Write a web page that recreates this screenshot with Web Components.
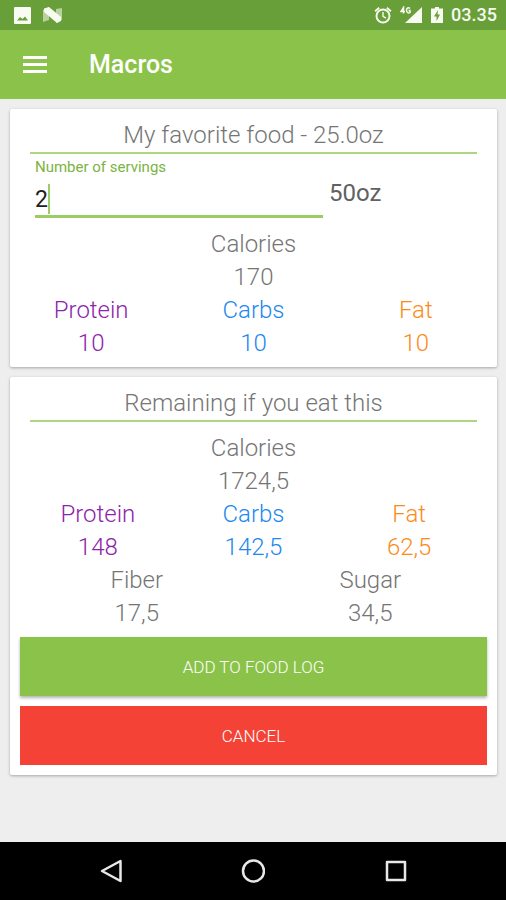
<!DOCTYPE html>
<html lang="en">
<head>
<meta charset="utf-8">
<meta name="viewport" content="width=device-width, initial-scale=1">
<title>Macros</title>
<style>
  body {
    margin: 0;
    background: #eee;
    color: #757575;
    font-family: Roboto, "Noto Sans", sans-serif;
    font-weight: 300;
  }
</style>
</head>
<body>
<macro-app></macro-app>

<script>
class StatusBar extends HTMLElement {
  constructor() {
    super();

    this.host = this.attachShadow({ mode: 'open' });
  }

  connectedCallback() {
    this.host.innerHTML = `
      <style>
        :host {
          align-items: center;
          background: #689f38;
          box-sizing: border-box;
          color: #f7fbf2;
          display: flex;
          height: 30px;
          justify-content: space-between;
          padding: 0 9px 0 14px;
        }

        .group {
          align-items: center;
          display: flex;
        }

        .group--left {
          gap: 12px;
        }

        .group--right {
          gap: 8px;
        }

        svg {
          display: block;
          fill: currentColor;
        }

        time {
          font-size: 18px;
          font-weight: 500;
          line-height: 32px;
        }
      </style>
      <div class="group group--left">
        <svg width="17" height="17" viewBox="0 0 17 17" aria-hidden="true">
          <path fill-rule="evenodd" d="M1 0h15a1 1 0 0 1 1 1v15a1 1 0 0 1-1 1H1a1 1 0 0 1-1-1V1a1 1 0 0 1 1-1zM3 13.500h11l-3-4-2.500 2.500L6 10z"/>
        </svg>
        <svg width="19" height="16" viewBox="0 0 19 16" aria-hidden="true">
          <path opacity=".55" d="M0 3l6-3v13l-6 2zM13 2l6-1v12l-6 3z"/>
          <path d="M1 1.500L6 0l12 10v4l-4 2L1 5z"/>
        </svg>
      </div>
      <div class="group group--right">
        <svg width="18" height="18" viewBox="0 0 18 18" aria-hidden="true">
          <circle cx="9" cy="10" r="6.500" fill="none" stroke="currentColor" stroke-width="2"/>
          <path d="M.5 4.500L4.600 1l1.200 1.400-4.100 3.500zM17.500 4.500L13.400 1l-1.200 1.400 4.100 3.500z"/>
          <path d="M9 6v4.300l3 1.900" fill="none" stroke="currentColor" stroke-width="1.400"/>
        </svg>
        <svg width="23" height="18" viewBox="0 0 23 18" aria-hidden="true">
          <path d="M22 1v16H5z"/>
          <path d="M3.500 7.500V1.500L1 5.500h4M10 2.500C8.500 1 6.500 2 6.500 4.300S8.500 7.500 10 6.500V4.500H8.500" fill="none" stroke="currentColor" stroke-width="1.500"/>
        </svg>
        <svg width="12" height="18" viewBox="0 0 12 18" aria-hidden="true">
          <path fill-rule="evenodd" d="M4 1h4v1.500h4V17H0V2.500h4zM7 4L3 10.500h2.500V15l3.500-6.500H6.500z"/>
        </svg>
        <time>03.35</time>
      </div>
    `;
  }
}

window.customElements.define('status-bar', StatusBar);

class AppBar extends HTMLElement {
  constructor() {
    super();

    this.host = this.attachShadow({ mode: 'open' });
  }

  connectedCallback() {
    this.host.innerHTML = `
      <style>
        :host {
          align-items: center;
          background: #8bc34a;
          box-sizing: border-box;
          color: #fff;
          display: flex;
          gap: 42px;
          height: 69px;
          padding: 0 23px;
        }

        button {
          background: none;
          border: 0;
          color: inherit;
          padding: 0;
        }

        svg {
          display: block;
        }

        h1 {
          font-size: 25px;
          font-weight: 500;
          line-height: 32px;
          margin: 0;
        }
      </style>
      <button type="button" aria-label="Menu">
        <svg width="24" height="18" viewBox="0 0 24 18">
          <path d="M0 1.500h24M0 8.500h24M0 15.500h24" stroke="currentColor" stroke-width="3"/>
        </svg>
      </button>
      <h1><slot></slot></h1>
    `;
  }
}

window.customElements.define('app-bar', AppBar);

class MacroCard extends HTMLElement {
  constructor() {
    super();

    this.host = this.attachShadow({ mode: 'open' });
  }

  connectedCallback() {
    this.host.innerHTML = `
      <style>
        :host {
          background: #fff;
          border-radius: 2px;
          box-shadow: 0 1px 3px rgba(0, 0, 0, 0.3);
          display: block;
          padding: 10px 0 7px;
        }

        h2 {
          border-bottom: 2px solid #aed581;
          font-size: 24px;
          font-weight: inherit;
          line-height: 33px;
          margin: 0 20px;
          text-align: center;
        }
      </style>
      <h2><slot name="title"></slot></h2>
      <slot></slot>
    `;
  }
}

window.customElements.define('macro-card', MacroCard);

class ServingField extends HTMLElement {
  static get observedAttributes() {
    return ['total', 'value'];
  }

  get total() {
    return this.getAttribute('total') || '';
  }

  get value() {
    return this.getAttribute('value') || '';
  }

  attributeChangedCallback(attrName, oldVal, newVal) {
    if (oldVal !== newVal) {
      this.render();
    }
  }

  constructor() {
    super();

    this.host = this.attachShadow({ mode: 'open' });
  }

  connectedCallback() {
    this.render();
  }

  render() {
    this.host.innerHTML = `
      <style>
        :host {
          display: grid;
          gap: 0 6px;
          grid-template-columns: 2fr 1fr;
          padding: 3px 24px 10px 25px;
        }

        label {
          color: #7cb342;
          font-size: 15px;
          font-weight: 400;
          grid-column: 1 / -1;
          line-height: 20px;
        }

        .box {
          align-items: center;
          border-bottom: 3px solid #9ccc65;
          display: flex;
          height: 32px;
          padding-top: 6px;
        }

        input {
          background: none;
          border: 0;
          caret-color: transparent;
          color: #212121;
          field-sizing: content;
          font: inherit;
          font-size: 23px;
          font-weight: 400;
          outline: 0;
          padding: 0;
        }

        /* Insertion point, sits right after the typed number */
        .caret {
          background: #9ccc65;
          height: 30px;
          width: 2px;
        }

        output {
          color: #616161;
          font-size: 24px;
          font-weight: 400;
          line-height: 33px;
        }
      </style>
      <label for="servings">Number of servings</label>
      <div class="box">
        <input id="servings" type="text" inputmode="decimal" value="${this.value}">
        <span class="caret"></span>
      </div>
      <output for="servings">${this.total}</output>
    `;
  }
}

window.customElements.define('serving-field', ServingField);

class MacroRow extends HTMLElement {
  constructor() {
    super();

    this.host = this.attachShadow({ mode: 'open' });
  }

  connectedCallback() {
    this.host.innerHTML = `
      <style>
        :host {
          display: grid;
          grid-auto-columns: minmax(0, 1fr);
          grid-auto-flow: column;
        }
      </style>
      <slot></slot>
    `;
  }
}

window.customElements.define('macro-row', MacroRow);

class MacroStat extends HTMLElement {
  static get observedAttributes() {
    return ['kind', 'label', 'value'];
  }

  get kind() {
    return this.getAttribute('kind') || 'plain';
  }

  get label() {
    return this.getAttribute('label');
  }

  get value() {
    return this.getAttribute('value');
  }

  attributeChangedCallback(attrName, oldVal, newVal) {
    if (oldVal !== newVal) {
      this.render();
    }
  }

  constructor() {
    super();

    this.host = this.attachShadow({ mode: 'open' });
  }

  connectedCallback() {
    this.render();
  }

  render() {
    this.host.innerHTML = `
      <style>
        :host {
          display: block;
          font-size: 24px;
          line-height: 33px;
          text-align: center;
        }

        .protein {
          color: #8e24aa;
        }

        .carbs {
          color: #1e88f0;
        }

        .fat {
          color: #fb8c1a;
        }
      </style>
      <div class="${this.kind}">
        <div>${this.label}</div>
        <div>${this.value}</div>
      </div>
    `;
  }
}

window.customElements.define('macro-stat', MacroStat);

class ActionButton extends HTMLElement {
  constructor() {
    super();

    this.host = this.attachShadow({ mode: 'open' });
  }

  connectedCallback() {
    this.host.innerHTML = `
      <style>
        :host {
          display: block;
        }

        button {
          background: var(--button-color, #8bc34a);
          border: 0;
          box-shadow: var(--button-shadow, none);
          color: #fff;
          display: block;
          font: inherit;
          font-size: 17px;
          height: 59px;
          text-transform: uppercase;
          width: 100%;
        }
      </style>
      <button type="button"><slot></slot></button>
    `;
  }
}

window.customElements.define('action-button', ActionButton);

class NavBar extends HTMLElement {
  constructor() {
    super();

    this.host = this.attachShadow({ mode: 'open' });
  }

  connectedCallback() {
    this.host.innerHTML = `
      <style>
        :host {
          align-items: center;
          background: #000;
          box-sizing: border-box;
          color: #e8e8e8;
          display: grid;
          grid-template-columns: repeat(3, 1fr);
          height: 58px;
          justify-items: center;
          padding: 0 8%;
        }

        button {
          background: none;
          border: 0;
          color: inherit;
          padding: 0;
        }

        svg {
          display: block;
          fill: none;
          stroke: currentColor;
          stroke-linejoin: round;
          stroke-width: 2.5;
        }
      </style>
      <button type="button" aria-label="Back">
        <svg width="24" height="24" viewBox="0 0 24 24"><path d="M21.500 2v20L3 12z"/></svg>
      </button>
      <button type="button" aria-label="Home">
        <svg width="24" height="24" viewBox="0 0 24 24"><circle cx="12.500" cy="12" r="10.500"/></svg>
      </button>
      <button type="button" aria-label="Recent apps">
        <svg width="24" height="24" viewBox="0 0 24 24"><path d="M4 3h18v18H4z"/></svg>
      </button>
    `;
  }
}

window.customElements.define('nav-bar', NavBar);

class MacroApp extends HTMLElement {
  constructor() {
    super();

    this.host = this.attachShadow({ mode: 'open' });
  }

  connectedCallback() {
    this.host.innerHTML = `
      <style>
        :host {
          display: flex;
          flex-direction: column;
          min-height: 100vh;
        }

        main {
          display: flex;
          flex: 1;
          flex-direction: column;
          gap: 10px;
          padding: 10px 9px 10px 10px;
        }

        .remaining {
          padding: 10px 10px 0;
        }

        .actions {
          display: grid;
          gap: 10px;
          padding: 7px 10px 3px;
        }

        .add {
          --button-shadow: 0 2px 3px rgba(0, 0, 0, 0.3);
        }

        .cancel {
          --button-color: #f44336;
        }
      </style>
      <status-bar></status-bar>
      <app-bar>Macros</app-bar>
      <main>
        <macro-card>
          <span slot="title">My favorite food - 25.0oz</span>
          <serving-field value="2" total="50oz"></serving-field>
          <macro-stat label="Calories" value="170"></macro-stat>
          <macro-row>
            <macro-stat kind="protein" label="Protein" value="10"></macro-stat>
            <macro-stat kind="carbs" label="Carbs" value="10"></macro-stat>
            <macro-stat kind="fat" label="Fat" value="10"></macro-stat>
          </macro-row>
        </macro-card>
        <macro-card>
          <span slot="title">Remaining if you eat this</span>
          <div class="remaining">
            <macro-stat label="Calories" value="1724,5"></macro-stat>
            <macro-row>
              <macro-stat kind="protein" label="Protein" value="148"></macro-stat>
              <macro-stat kind="carbs" label="Carbs" value="142,5"></macro-stat>
              <macro-stat kind="fat" label="Fat" value="62,5"></macro-stat>
            </macro-row>
            <macro-row>
              <macro-stat label="Fiber" value="17,5"></macro-stat>
              <macro-stat label="Sugar" value="34,5"></macro-stat>
            </macro-row>
          </div>
          <div class="actions">
            <action-button class="add">Add to food log</action-button>
            <action-button class="cancel">Cancel</action-button>
          </div>
        </macro-card>
      </main>
      <nav-bar></nav-bar>
    `;
  }
}

window.customElements.define('macro-app', MacroApp);
</script>
</body>
</html>
